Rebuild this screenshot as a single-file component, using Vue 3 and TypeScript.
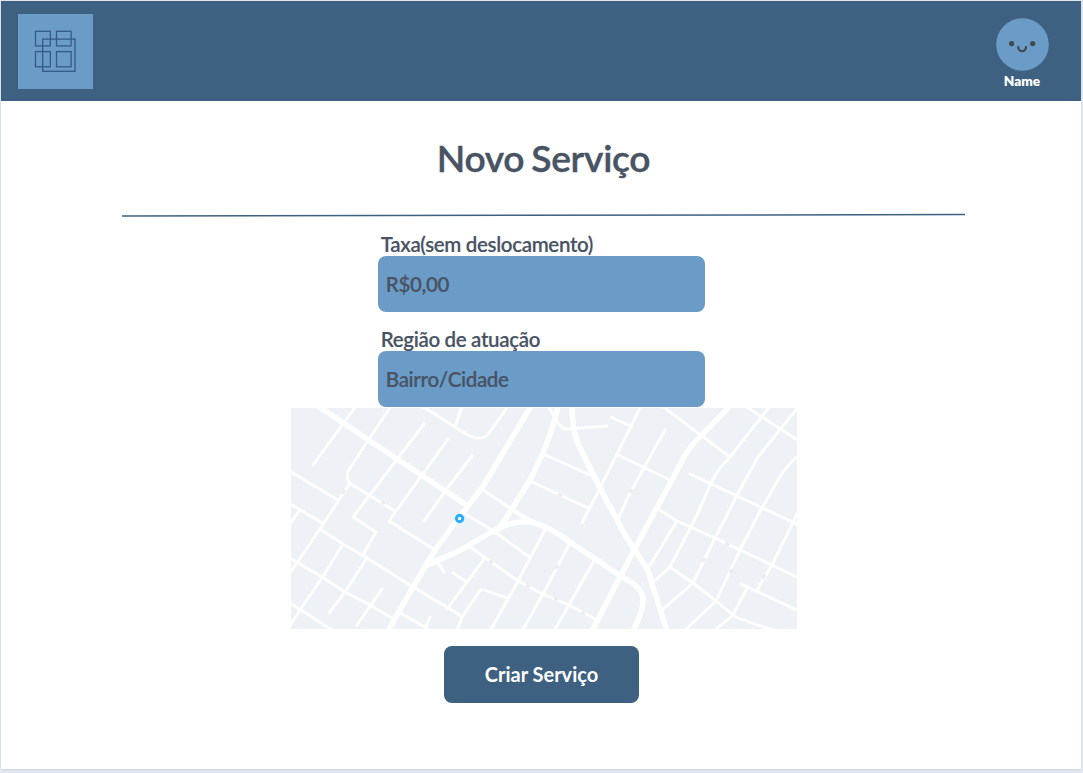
<script setup lang="ts">
import { reactive } from 'vue'

interface Field { id: string; label: string; placeholder: string }

const fields: Field[] = [
  { id: 'fee', label: 'Taxa(sem deslocamento)', placeholder: 'R$0,00' },
  { id: 'region', label: 'Região de atuação', placeholder: 'Bairro/Cidade' },
]
const values = reactive<Record<string, string>>({ fee: '', region: '' })

const avenues: string[] = [
  'M318 406L370 441L468 506',
  'M531 406L482 488L457 520L435 550L413 587L388 631',
  'M558 406Q553 430 543 453L530 480L505 520L495 532',
  'M572 406C573 425 573 436 582 452L600 488L625 535L642 561Q649 569 651 581L667 631',
  'M427 565L459 551L495 530C512 521 530 519 545 527Q557 532 570 542L622 577C645 588 650 598 633 631',
  'M730 406L702 435Q689 447 683 459L652 517L633 552L592 631',
]

const streets: string[] = [
  'M356 406L313 465', 'M391 406L350 468Q344 478 351 484L395 511',
  'M424 424L353 517L376 532L363 555', 'M448 439L422 475L389 521L435 550',
  'M422 406L455 427L466 434C478 441 486 438 490 432L508 406', 'M462 406L455 427',
  'M472 456L446 490L424 521', 'M291 472L338 500', 'M350 483L320 529L297 563L288 575',
  'M289 503L322 523', 'M299 511L289 525',
  'M320 529L343 544L367 558L413 587L460 615', 'M343 544L322 578L300 610L288 629',
  'M367 558L345 592L329 613', 'M382 589L357 625', 'M288 557L322 577L345 592L370 605L392 618',
  'M288 602L334 631', 'M438 563L444 572', 'M453 573L467 582',
  'M485 558L467 582L447 609', 'M400 613L427 628', 'M430 617L424 631',
  'M470 547L518 581L543 594L569 605L595 619', 'M462 512L495 532L528 556',
  'M546 528L518 581L490 631', 'M570 543L543 594L522 631', 'M594 561L569 605L554 631',
  'M507 598L481 589L462 617L457 631', 'M455 612L462 617',
  'M641 406L600 488L582 523', 'M483 490L513 510',
  'M548 406L558 423Q561 428 566 429L607 426', 'M611 417L632 427', 'M618 455L670 480',
  'M543 454L597 478', 'M530 481L588 508', 'M665 430L630 493L618 519',
  'M662 406L730 457', 'M658 509L677 521L715 538L740 550L772 565L799 578',
  'M770 406L730 457Q716 471 710 485L697 515L670 567L653 582',
  'M799 406L758 457L737 495L727 515L715 538L693 583L662 610',
  'M799 455Q784 468 778 480L758 515L740 550L716 601L684 631',
  'M745 406L799 441', 'M690 474L799 525', 'M799 510L772 565L757 590',
  'M677 521L650 565', 'M670 567L693 583L716 601L733 615Q738 619 777 631',
  'M741 584L799 611', 'M747 588L733 615L714 631',
]

const placeMarks: [number, number, number][] = [
  [343.5, 492, -60], [383, 503, 30], [560, 495, 25], [631, 491, -60],
  [491, 562, 30], [528, 586, 25], [556, 599, 25], [583, 613, 25],
  [557, 567, -60], [704, 560, -60], [731, 571, -60], [764, 577, -60], [727, 544, 25],
]
</script>

<template>
  <div class="page">
    <div class="window">
      <header class="topbar">
        <svg class="logo" viewBox="0 0 75 75" aria-label="Logo">
          <rect width="75" height="75" fill="#6b9cc8" />
          <g fill="none" stroke="#355a88" stroke-width="1.3">
            <rect x="17.5" y="17.3" width="14.8" height="14.6" />
            <rect x="38.5" y="17.3" width="14.6" height="14.6" />
            <rect x="17.5" y="37.6" width="14.8" height="15.2" />
            <rect x="38.5" y="37.6" width="14.6" height="15.2" />
            <rect x="24.7" y="25.1" width="32.3" height="32.2" />
          </g>
        </svg>
        <div class="profile">
          <svg class="avatar" viewBox="0 0 53 53" aria-hidden="true">
            <circle cx="26.5" cy="26.5" r="26.3" fill="#6b9cc8" />
            <circle cx="15.6" cy="25.6" r="2.6" fill="#414850" />
            <circle cx="36.7" cy="25.6" r="2.6" fill="#414850" />
            <path d="M22.2 29a3.9 4.2 0 0 0 7.8 0" fill="none" stroke="#414850" stroke-width="2.2" stroke-linecap="round" />
          </svg>
          <span class="name">Name</span>
        </div>
      </header>

      <main class="content">
        <h1>Novo Serviço</h1>
        <svg class="divider" viewBox="0 0 843 4" aria-hidden="true">
          <path d="M0 3L843 1.6" stroke="#3e6182" stroke-width="1.5" />
        </svg>

        <form class="form" @submit.prevent>
          <div v-for="field in fields" :key="field.id" class="field">
            <label :for="field.id">{{ field.label }}</label>
            <input :id="field.id" v-model="values[field.id]" :placeholder="field.placeholder" />
          </div>
          <svg class="map" viewBox="291 408 506 221" role="img">
            <rect x="291" y="408" width="506" height="221" fill="#eef1f6" />
            <g fill="none" stroke="#fff" stroke-linecap="round" stroke-linejoin="round">
              <path v-for="d in streets" :key="d" :d="d" stroke-width="2.9" />
              <path d="M511 509Q527 520 547 528" stroke-width="4" />
              <path v-for="d in avenues" :key="d" :d="d" stroke-width="5.4" />
            </g>
            <ellipse
              v-for="([x, y, angle], i) in placeMarks" :key="i" :cx="x" :cy="y" rx="1.9" ry="0.9"
              :transform="`rotate(${angle} ${x} ${y})`" fill="#f2f2f3" stroke="#dcdddf" stroke-width="0.6"
            />
            <circle cx="459.6" cy="518.5" r="3.2" fill="#fff" stroke="#22b1fa" stroke-width="2.9" />
          </svg>
          <button type="submit">Criar Serviço</button>
        </form>
      </main>
    </div>
  </div>
</template>

<style>
body {
  margin: 0;
  background: #e6eaf1;
}
</style>

<style scoped>
.page {
  box-sizing: border-box;
  height: 773px;
  padding: 1px 2px 4px 1px;
  overflow: hidden;
  background: #e6eaf1;
  font-family: Lato, "Liberation Sans", sans-serif;
  color: #485363;
}
.window {
  height: 768px;
  background: #fff;
  box-shadow: 0 1px 3px #c6cfdc;
}
.topbar {
  box-sizing: border-box;
  display: flex;
  justify-content: space-between;
  align-items: flex-start;
  height: 100.4px;
  padding: 12.7px 22px 0 16.8px;
  background: #3e6182;
}
.logo {
  width: 75px;
  height: 75px;
}
.profile {
  display: flex;
  flex-direction: column;
  align-items: center;
  width: 75px;
  padding-top: 4px;
}
.avatar {
  width: 53px;
  height: 53px;
  margin-left: 1px;
}
.name {
  margin: 2px 0 0 1px;
  font-size: 13.6px;
  line-height: 17px;
  font-weight: 800;
  color: #fff;
}
.content {
  display: flex;
  flex-direction: column;
  align-items: center;
}
h1 {
  margin: 32.6px 0 0 5px;
  font-size: 37.2px;
  line-height: 48px;
  font-weight: 600;
  letter-spacing: -0.3px;
  word-spacing: -2px;
  -webkit-text-stroke: 0.4px currentColor;
}
.divider {
  width: 843px;
  height: 4px;
  margin: 31px 0 0 5px;
}
.form {
  display: flex;
  flex-direction: column;
  align-items: center;
  margin-top: 16px;
}
.field {
  display: flex;
  flex-direction: column;
  width: 327.5px;
  margin-left: 1px;
}
.field + .field {
  margin-top: 16px;
}
label {
  height: 23px;
  padding-left: 3px;
  font-size: 20.5px;
  line-height: 22px;
  font-weight: 600;
  letter-spacing: -0.34px;
  white-space: nowrap;
  -webkit-text-stroke: 0.15px currentColor;
}
input {
  box-sizing: border-box;
  height: 56px;
  padding: 0 8px;
  border: 0;
  border-radius: 8px;
  background: #6b9cc8;
  font: 600 20.5px/24px Lato, "Liberation Sans", sans-serif;
  letter-spacing: -0.34px;
  color: #485363;
  -webkit-text-stroke: 0.15px currentColor;
}
input::placeholder {
  color: #485363;
  opacity: 1;
}
.map {
  display: block;
  width: 506px;
  height: 221px;
  margin: 1px 0 0 6px;
}
button {
  width: 195px;
  height: 57px;
  margin: 17px 0 0 1px;
  padding: 0 0 1px;
  border: 0;
  border-radius: 8px;
  background: #3e6182;
  font: 700 20px/24px Lato, "Liberation Sans", sans-serif;
  color: #fff;
}
</style>
